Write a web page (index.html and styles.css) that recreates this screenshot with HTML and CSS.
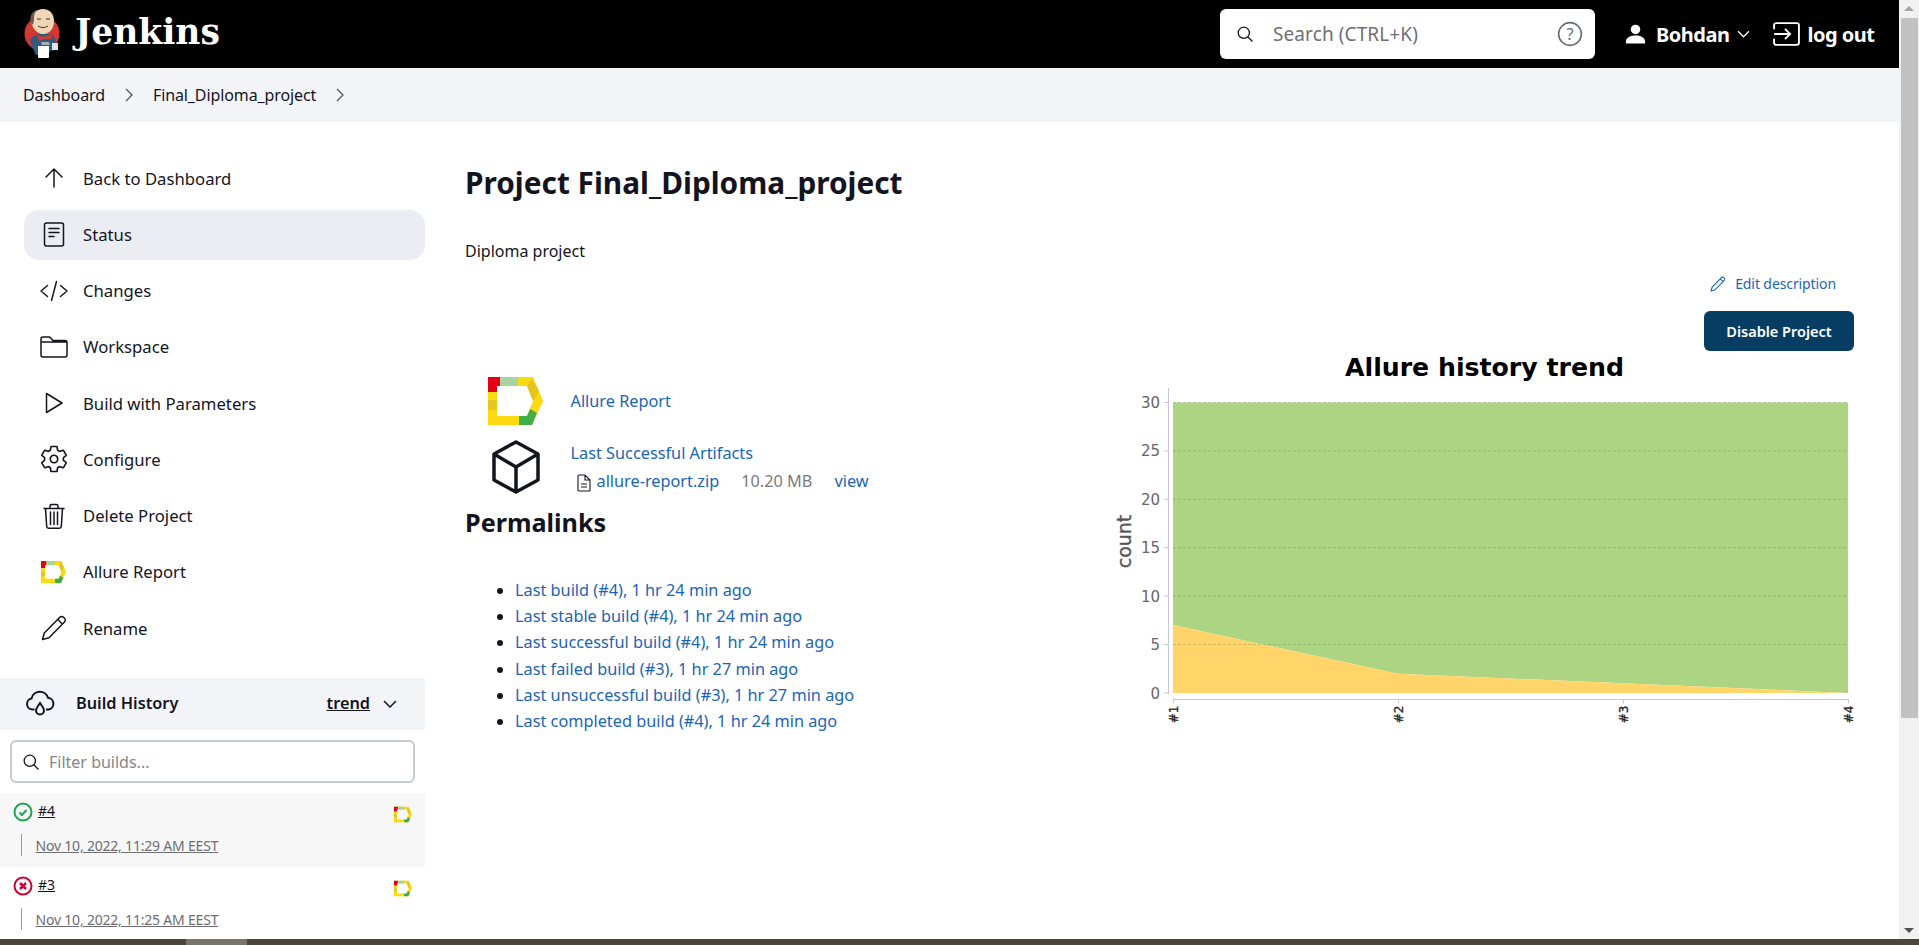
FILE: index.html
```html
<!DOCTYPE html>
<html lang="en">
<head>
  <meta charset="UTF-8">
  <title>Final_Diploma_project [Jenkins]</title>
  <link rel="stylesheet" href="styles.css">
</head>
<body>
  <svg class="defs" width="0" height="0">
    <symbol id="allure" viewBox="0 0 55 48">
      <path fill="#fdd90f" fill-rule="evenodd" d="M0 0H45L55 24 44 48H0ZM9 9V39H39L45 24 39 9Z"/>
      <path fill="#e5001a" d="M0 0H12V9H9V15H0Z"/>
      <path fill="#a9d3a0" d="M12 0H30V9H12Z"/>
      <path fill="#e6c61f" d="M0 23H9V33H0Z"/>
      <path fill="#e3c41f" d="M39 9 44 2 51 14 45 24Z"/>
      <path fill="#3fae49" d="M31 39H39L42 32 49 36 44 48H31Z"/>
    </symbol>
  </svg>

  <div class="window">
    <div class="page">
      <header class="navbar">
        <a class="brand" href="#">
          <svg class="mascot" viewBox="0 0 38 50" width="38" height="50">
            <circle cx="19" cy="24.500" r="17.500" fill="#d33833"/>
            <path fill="#335b78" d="M7 31c3-5 8-6 11-6l9 0c4 1 6 5 6 9l-1 7-5 1-2 4-12 0-3-6z"/>
            <path fill="#f0d6b7" d="M8 12C8 5 13 0 20 0s11 5 11 12c0 7-4 13-11 13S9 18 8 12z"/>
            <path fill="#6b5a52" d="M8 14C6 8 9 2 14 1c-3 3-3 7-3 10l-1 5z"/>
            <path fill="none" stroke="#3a2f2b" stroke-width="1" d="M14 10h4M23 10h4M15 17c3 2 7 2 10 0"/>
            <path fill="#d33833" d="M14 26l7 2 7-3 1 5-7 0-6 2z"/>
            <path fill="#9fb0b8" d="M18 33h8l1 3h-8z"/>
            <path fill="#fff" d="M15 37h11v11a1 1 0 0 1-1 1h-9a1 1 0 0 1-1-1z"/>
            <path fill="#dfe4e8" d="M29 34h6v7h-6z"/>
          </svg>
          <span class="brand-name">Jenkins</span>
        </a>
        <div class="search">
          <svg class="ico-16" viewBox="0 0 16 16"><circle cx="6.800" cy="6.800" r="5.600"/><path d="M11 11l4.500 4.500"/></svg>
          <span class="search-text">Search (CTRL+K)</span>
          <svg class="help" viewBox="0 0 24 24"><circle cx="12" cy="12" r="10.500"/><text x="12" y="17.500" text-anchor="middle">?</text></svg>
        </div>
        <svg class="person" viewBox="0 0 22 20"><circle cx="11" cy="5.200" r="5"/><path d="M1 20v-2.500C1 13.500 6 11.500 11 11.500s10 2 10 6V20z"/></svg>
        <span class="user">Bohdan</span>
        <svg class="user-caret" viewBox="0 0 12 7"><path d="M1 1l5 5 5-5"/></svg>
        <svg class="logout-ico" viewBox="0 0 28 23"><path d="M2 7V3a2 2 0 0 1 2-2h20a2 2 0 0 1 2 2v17a2 2 0 0 1-2 2H4a2 2 0 0 1-2-2v-4"/><path d="M2 11.500h15M12.500 6.500l5 5-5 5"/></svg>
        <span class="logout">log out</span>
      </header>

      <nav class="crumbs">
        <a href="#">Dashboard</a>
        <svg viewBox="0 0 8 14"><path d="M1 1l6 6-6 6"/></svg>
        <a href="#">Final_Diploma_project</a>
        <svg viewBox="0 0 8 14"><path d="M1 1l6 6-6 6"/></svg>
      </nav>

      <div class="content">
        <aside class="sidebar">
          <div class="tasks">
            <a class="task" href="#">
              <svg viewBox="0 0 30 30"><path d="M15 24V7M7 14l8-8 8 8"/></svg>
              Back to Dashboard
            </a>
            <a class="task current" href="#">
              <svg viewBox="0 0 30 30"><rect x="5.500" y="4" width="19" height="23" rx="2"/><path d="M10 9.500h10M10 13.500h10M10 17.500h5"/></svg>
              Status
            </a>
            <a class="task" href="#">
              <svg viewBox="0 0 30 30"><path d="M8.500 9.500 2 15l6.500 5.500M21.500 9.500 28 15l-6.500 5.500M17.500 5.500l-5 19"/></svg>
              Changes
            </a>
            <a class="task" href="#">
              <svg viewBox="0 0 30 30"><path d="M2 10V7a2 2 0 0 1 2-2h6a2 2 0 0 1 1.500.7L14 8.500h12a2 2 0 0 1 2 2V23a2 2 0 0 1-2 2H4a2 2 0 0 1-2-2V10h26"/></svg>
              Workspace
            </a>
            <a class="task" href="#">
              <svg viewBox="0 0 30 30"><path d="M7.500 5.500 23 15 7.500 24.500Z"/></svg>
              Build with Parameters
            </a>
            <a class="task" href="#">
              <svg viewBox="0 0 512 512" class="thin"><path d="M262.29 192.31a64 64 0 1057.4 57.4 64.13 64.13 0 00-57.4-57.4zM416.39 256a154.34 154.34 0 01-1.53 20.79l45.21 35.46a10.81 10.81 0 012.45 13.75l-42.77 74a10.81 10.81 0 01-13.14 4.59l-44.9-18.08a16.11 16.11 0 00-15.17 1.75A164.48 164.48 0 01325 400.8a15.94 15.94 0 00-8.82 12.14l-6.73 47.89a11.08 11.08 0 01-10.68 9.17h-85.54a11.11 11.11 0 01-10.69-8.87l-6.72-47.82a16.07 16.07 0 00-9-12.22 155.3 155.3 0 01-21.46-12.57 16 16 0 00-15.11-1.71l-44.89 18.07a10.81 10.81 0 01-13.14-4.58l-42.77-74a10.8 10.8 0 012.45-13.75l38.21-30a16.05 16.05 0 006-14.08c-.36-4.17-.58-8.33-.58-12.5s.21-8.27.58-12.35a16 16 0 00-6.07-13.94l-38.19-30A10.81 10.81 0 0149.48 186l42.77-74a10.81 10.81 0 0113.14-4.59l44.9 18.08a16.11 16.11 0 0015.17-1.75A164.48 164.48 0 01187 111.2a15.94 15.94 0 008.82-12.14l6.73-47.89A11.08 11.08 0 01213.23 42h85.54a11.11 11.11 0 0110.69 8.87l6.72 47.82a16.07 16.07 0 009 12.22 155.3 155.3 0 0121.46 12.57 16 16 0 0015.11 1.71l44.89-18.07a10.81 10.81 0 0113.14 4.58l42.77 74a10.8 10.8 0 01-2.45 13.75l-38.21 30a16.05 16.05 0 00-6.05 14.08c.33 4.14.55 8.3.55 12.47z"/></svg>
              Configure
            </a>
            <a class="task" href="#">
              <svg viewBox="0 0 30 30"><path d="M6.500 7.500l1.200 18a2 2 0 0 0 2 1.800h10.600a2 2 0 0 0 2-1.800l1.200-18M5 7.500h20M11 7.500V5a1.500 1.500 0 0 1 1.500-1.500h5A1.500 1.500 0 0 1 19 5v2.500M11.500 11v12.500M15 11v12.500M18.500 11v12.500"/></svg>
              Delete Project
            </a>
            <a class="task" href="#">
              <svg class="plain" viewBox="0 0 30 30"><use href="#allure" x="2" y="4" width="25" height="22"/></svg>
              Allure Report
            </a>
            <a class="task" href="#">
              <svg viewBox="0 0 30 30"><path d="M3.500 26.500l1.800-6.500L20.800 4.300a2.600 2.600 0 0 1 3.700 0l1 1a2.600 2.600 0 0 1 0 3.700L10 24.700zM18.800 6.500l4.500 4.500"/></svg>
              Rename
            </a>
          </div>

          <div class="history-head">
            <svg viewBox="0 0 30 30"><path d="M9.500 20.500h-2a5.500 5.500 0 0 1-1-10.900 8.500 8.500 0 0 1 16.500-.8 5.900 5.900 0 0 1 .5 11.700h-2.500"/><path d="M15 14c2.500 3.500 4 5.500 4 7.500a4 4 0 0 1-8 0c0-2 1.500-4 4-7.500z"/></svg>
            <b>Build History</b>
            <a class="trend" href="#">trend</a>
            <svg class="caret" viewBox="0 0 14 8"><path d="M1 1l6 6 6-6"/></svg>
          </div>

          <div class="filter">
            <svg class="ico-16" viewBox="0 0 16 16"><circle cx="6.800" cy="6.800" r="5.600"/><path d="M11 11l4.500 4.500"/></svg>
            <span>Filter builds...</span>
          </div>

          <div class="build even">
            <div class="build-top">
              <svg class="build-status ok" viewBox="0 0 20 20"><circle cx="10" cy="10" r="8.500"/><path d="M6.500 10.500l2.500 2.500 4.500-5"/></svg>
              <a href="#">#4</a>
              <svg class="build-allure"><use href="#allure"/></svg>
            </div>
            <a class="build-time" href="#">Nov 10, 2022, 11:29 AM EEST</a>
          </div>
          <div class="build">
            <div class="build-top">
              <svg class="build-status bad" viewBox="0 0 20 20"><circle cx="10" cy="10" r="8.500"/><path d="M7 7l6 6M13 7l-6 6"/></svg>
              <a href="#">#3</a>
              <svg class="build-allure"><use href="#allure"/></svg>
            </div>
            <a class="build-time" href="#">Nov 10, 2022, 11:25 AM EEST</a>
          </div>
        </aside>

        <main class="main">
          <h1>Project Final_Diploma_project</h1>
          <p class="description">Diploma project</p>
          <div class="edit-row">
            <a href="#">
              <svg viewBox="0 0 30 30"><path d="M3.500 26.500l1.800-6.500L20.800 4.300a2.600 2.600 0 0 1 3.700 0l1 1a2.600 2.600 0 0 1 0 3.700L10 24.700zM18.800 6.500l4.500 4.500"/></svg>
              Edit description
            </a>
          </div>
          <div class="button-row"><button>Disable Project</button></div>

          <div class="overview">
            <div class="overview-left">
              <div class="action-row">
                <svg class="big-allure"><use href="#allure"/></svg>
                <a href="#">Allure Report</a>
              </div>
              <div class="action-row artifacts">
                <svg class="cube" viewBox="0 0 50 54"><path d="M25 2 47 14V40L25 52 3 40V14ZM3 14 25 27 47 14M25 27V52"/></svg>
                <div>
                  <a href="#">Last Successful Artifacts</a>
                  <div class="artifact">
                    <svg viewBox="0 0 14 18"><path d="M1 2a1 1 0 0 1 1-1h6l5 5v10a1 1 0 0 1-1 1H2a1 1 0 0 1-1-1zM8 1v5h5M4 10h6M4 13h6"/></svg>
                    <a class="zip" href="#">allure-report.zip</a>
                    <span class="size">10.20 MB</span>
                    <a href="#">view</a>
                  </div>
                </div>
              </div>
              <h2>Permalinks</h2>
              <ul class="permalinks">
                <li><a href="#">Last build (#4), 1 hr 24 min ago</a></li>
                <li><a href="#">Last stable build (#4), 1 hr 24 min ago</a></li>
                <li><a href="#">Last successful build (#4), 1 hr 24 min ago</a></li>
                <li><a href="#">Last failed build (#3), 1 hr 27 min ago</a></li>
                <li><a href="#">Last unsuccessful build (#3), 1 hr 27 min ago</a></li>
                <li><a href="#">Last completed build (#4), 1 hr 24 min ago</a></li>
              </ul>
            </div>

            <svg class="trend-chart" viewBox="0 0 754 385" width="754" height="385">
              <text class="chart-title" x="384.500" y="25" text-anchor="middle">Allure history trend</text>
              <polygon fill="#acd483" points="73,51.500 748,51.500 748,342 523,332.300 298,322.700 73,274"/>
              <polygon fill="#ffd569" points="73,274 298,322.700 523,332.300 748,342 73,342"/>
              <g class="grid">
                <path d="M73 51.500H748M73 99.900H748M73 148.300H748M73 196.700H748M73 245.100H748M73 293.500H748"/>
              </g>
              <path class="axis-y" d="M68.500 37V343M64 51.500h4M64 99.900h4M64 148.300h4M64 196.700h4M64 245.100h4M64 293.500h4M64 342h4"/>
              <path class="axis-x" d="M73 348.500H749M73.500 348.500v4M298.500 348.500v4M523.500 348.500v4M748.500 348.500v4"/>
              <g class="y-label">
                <text x="60" y="57">30</text>
                <text x="60" y="105.400">25</text>
                <text x="60" y="153.800">20</text>
                <text x="60" y="202.200">15</text>
                <text x="60" y="250.600">10</text>
                <text x="60" y="299">5</text>
                <text x="60" y="347.500">0</text>
              </g>
              <text class="y-title" transform="translate(31 190.500) rotate(-90)" text-anchor="middle">count</text>
              <g class="x-label">
                <text transform="translate(77.500 354.500) rotate(-90)">#1</text>
                <text transform="translate(302.500 354.500) rotate(-90)">#2</text>
                <text transform="translate(527.500 354.500) rotate(-90)">#3</text>
                <text transform="translate(752.500 354.500) rotate(-90)">#4</text>
              </g>
            </svg>
          </div>
        </main>
      </div>
    </div>

    <div class="scrollbar">
      <span class="arrow-up"></span>
      <span class="thumb"></span>
      <span class="arrow-down"></span>
    </div>
  </div>
  <div class="strip"><span></span></div>
</body>
</html>
```

FILE: styles.css
```css
* {
  box-sizing: border-box;
}
html, body {
  height: 945px;
  overflow: hidden;
}
body {
  margin: 0;
  font-family: "Noto Sans", Arial, sans-serif;
  font-size: 16px;
  color: #14141f;
  background: #fff;
}
a {
  color: inherit;
  text-decoration: none;
}
.defs {
  display: block;
  height: 0;
}
svg {
  flex-shrink: 0;
}
.window {
  display: flex;
  height: 939px;
}
.page {
  width: 1899px;
  overflow: hidden;
}

/* header */
.navbar {
  height: 68px;
  background: #000;
  color: #fff;
  display: flex;
  align-items: center;
  padding-left: 23px;
}
.brand {
  display: flex;
  align-items: center;
  gap: 14px;
  width: 1197px;
}
.brand-name {
  font-family: "DejaVu Serif", serif;
  font-weight: bold;
  font-size: 34.500px;
  padding-bottom: 4px;
}
.search {
  width: 375px;
  height: 50px;
  background: #fff;
  border-radius: 6px;
  color: #6f6f75;
  display: flex;
  align-items: center;
  padding: 0 12px 0 17px;
}
.ico-16 {
  width: 16px;
  height: 16px;
  fill: none;
  stroke: #14141f;
  stroke-width: 1.300;
}
.search-text {
  margin-left: 20px;
  flex: 1;
  font-size: 19px;
  letter-spacing: 0.100px;
}
.help {
  width: 26px;
  height: 26px;
  fill: none;
  stroke: #6b6b75;
  stroke-width: 1.500;
}
.help text {
  fill: #6b6b75;
  stroke: none;
  font-size: 15px;
}
.person {
  width: 21px;
  height: 20px;
  fill: #fff;
  margin-left: 30px;
}
.user, .logout {
  font-weight: 700;
  font-size: 20px;
  letter-spacing: -0.500px;
}
.user {
  margin-left: 10px;
}
.user-caret {
  width: 13px;
  height: 8px;
  fill: none;
  stroke: #fff;
  stroke-width: 1.200;
  margin-left: 8px;
}
.logout-ico {
  width: 29px;
  height: 24px;
  fill: none;
  stroke: #fff;
  stroke-width: 1.800;
  margin-left: 22px;
}
.logout {
  margin-left: 6px;
}

/* breadcrumbs */
.crumbs {
  height: 54px;
  background: #f3f4f8;
  display: flex;
  align-items: center;
  gap: 20px;
  padding-left: 23px;
  letter-spacing: -0.100px;
}
.crumbs svg {
  width: 8px;
  height: 14px;
  fill: none;
  stroke: #55555f;
  stroke-width: 1.300;
}

.content {
  display: flex;
}

/* sidebar */
.sidebar {
  width: 425px;
  padding-top: 32px;
}
.tasks {
  display: flex;
  flex-direction: column;
  gap: 6.250px;
  padding-left: 24px;
}
.task {
  height: 50px;
  border-radius: 15px;
  display: flex;
  align-items: center;
  gap: 14px;
  padding: 0 0 2px 15px;
  font-size: 16.700px;
}
.task svg {
  width: 30px;
  height: 30px;
  fill: none;
  stroke: #14141f;
  stroke-width: 1.500;
  stroke-linejoin: round;
  stroke-linecap: round;
}
.task svg.thin {
  stroke-width: 28;
}
.task svg.plain {
  stroke: none;
}
.task.current {
  background: #ecedf2;
}
.history-head {
  margin-top: 24px;
  height: 52px;
  background: #f3f4f8;
  display: flex;
  align-items: center;
  padding-left: 25px;
  font-weight: 600;
  font-size: 16.300px;
}
.history-head svg {
  width: 30px;
  height: 30px;
  fill: none;
  stroke: #14141f;
  stroke-width: 2;
}
.history-head b {
  font-weight: 600;
  margin-left: 21px;
  flex: 1;
  padding-bottom: 2px;
}
.trend {
  text-decoration: underline;
  padding-bottom: 2px;
}
.history-head .caret {
  width: 14px;
  height: 8px;
  stroke-width: 1.500;
  margin: 0 28px 0 13px;
}
.filter {
  margin: 10px 10px;
  height: 43px;
  border: 2px solid #c3ccd0;
  border-radius: 6px;
  color: #85858b;
  display: flex;
  align-items: center;
  gap: 10px;
  padding-left: 11px;
}
.build {
  height: 74px;
  padding: 9px 13px 0;
  overflow: hidden;
}
.build.even {
  background: #f7f7f8;
}
.build-top {
  display: flex;
  align-items: flex-start;
  font-size: 14px;
  line-height: 17px;
}
.build-top a {
  margin-left: 5px;
  text-decoration: underline;
}
.build-status {
  width: 20px;
  height: 20px;
  fill: none;
  stroke-width: 2;
}
.build-status.ok {
  stroke: #1ea64b;
}
.build-status.bad {
  stroke: #d3002d;
}
.build-status.bad path {
  stroke-width: 2.500;
}
.build-allure {
  width: 18px;
  height: 17px;
  margin: 4px 0 0 auto;
}
.build-time {
  display: block;
  margin: 11px 0 0 8px;
  border-left: 1px solid #9a9a9f;
  padding-left: 13.500px;
  height: 22px;
  line-height: 24px;
  font-size: 14px;
  letter-spacing: -0.200px;
  color: #6d6d73;
  text-decoration: underline;
}

/* main column */
.main {
  flex: 1;
  padding: 41px 45px 0 40px;
}
h1 {
  margin: 0;
  font-size: 29.800px;
  line-height: 40px;
  font-weight: 700;
}
.description {
  margin: 36px 0 0;
  line-height: 24px;
}
.edit-row {
  margin-top: 9px;
  display: flex;
  justify-content: flex-end;
  padding-right: 18px;
  font-size: 14px;
  line-height: 24px;
  letter-spacing: -0.100px;
  color: #1a64b8;
}
.edit-row a {
  display: flex;
  align-items: center;
  gap: 8px;
}
.edit-row svg {
  width: 18px;
  height: 18px;
  fill: none;
  stroke: currentColor;
  stroke-width: 1.800;
}
.button-row {
  margin-top: 15px;
  display: flex;
  justify-content: flex-end;
}
button {
  width: 150px;
  height: 40px;
  border: none;
  border-radius: 6px;
  background: #083d63;
  color: #fff;
  font: 600 14.500px "Noto Sans", Arial, sans-serif;
}
.overview {
  display: flex;
  justify-content: space-between;
}
.overview-left {
  padding-top: 26px;
  color: #1a64b8;
  font-size: 16.300px;
}
.action-row {
  display: flex;
  align-items: center;
  padding-left: 23px;
  height: 48px;
}
.big-allure {
  width: 55px;
  height: 48px;
  margin-right: 27.500px;
}
.artifacts {
  margin-top: 15px;
  height: 54px;
  align-items: flex-start;
}
.cube {
  width: 50px;
  height: 54px;
  margin: 0 29.500px 0 3px;
  fill: none;
  stroke: #14141f;
  stroke-width: 3.500;
  stroke-linejoin: round;
}
.artifacts > div {
  line-height: 26px;
}
.artifact {
  display: flex;
  align-items: center;
  margin-top: 2px;
}
.artifact svg {
  width: 14px;
  height: 18px;
  margin: 4px 6px 0 6px;
  fill: none;
  stroke: #14141f;
  stroke-width: 1.100;
}
.size {
  color: #7a7a80;
  margin: 0 22px;
}
h2 {
  margin: 11px 0 0;
  color: #14141f;
  font-size: 25.200px;
  line-height: 34px;
  font-weight: 700;
}
.permalinks {
  margin: 38px 0 0;
  padding-left: 50px;
  line-height: 26.200px;
}
.permalinks li::marker {
  color: #14141f;
}

/* chart */
.trend-chart text {
  font-family: "DejaVu Sans", sans-serif;
}
.chart-title {
  font-size: 25.200px;
  font-weight: bold;
  fill: #000;
}
.grid path {
  fill: none;
  stroke: rgba(90, 120, 60, 0.3);
  stroke-dasharray: 3 2;
}
.axis-y {
  fill: none;
  stroke: #c6c6d8;
}
.axis-x {
  fill: none;
  stroke: #c9c9c9;
}
.y-label text {
  font-size: 15px;
  fill: #666;
  text-anchor: end;
}
.y-title {
  font-size: 19px;
  fill: #555;
  stroke: #555;
  stroke-width: 0.300;
}
.x-label text {
  font-size: 12px;
  fill: #222;
  text-anchor: end;
  stroke: #222;
  stroke-width: 0.300;
}

/* window scrollbars */
.scrollbar {
  width: 20px;
  background: #f1f1f1;
  display: flex;
  flex-direction: column;
  align-items: center;
}
.thumb {
  width: 17px;
  height: 700px;
  background: #c1c1c1;
  margin-top: 7px;
}
.arrow-up, .arrow-down {
  width: 0;
  height: 0;
  border-left: 5px solid transparent;
  border-right: 5px solid transparent;
}
.arrow-up {
  margin-top: 6px;
  border-bottom: 5px solid #a3a3a3;
}
.arrow-down {
  margin-top: auto;
  margin-bottom: 6px;
  border-top: 5px solid #505050;
}
.strip {
  height: 6px;
  background: #4a4639;
  padding-left: 186px;
}
.strip span {
  display: block;
  width: 61px;
  height: 6px;
  background: #78766a;
}
```
